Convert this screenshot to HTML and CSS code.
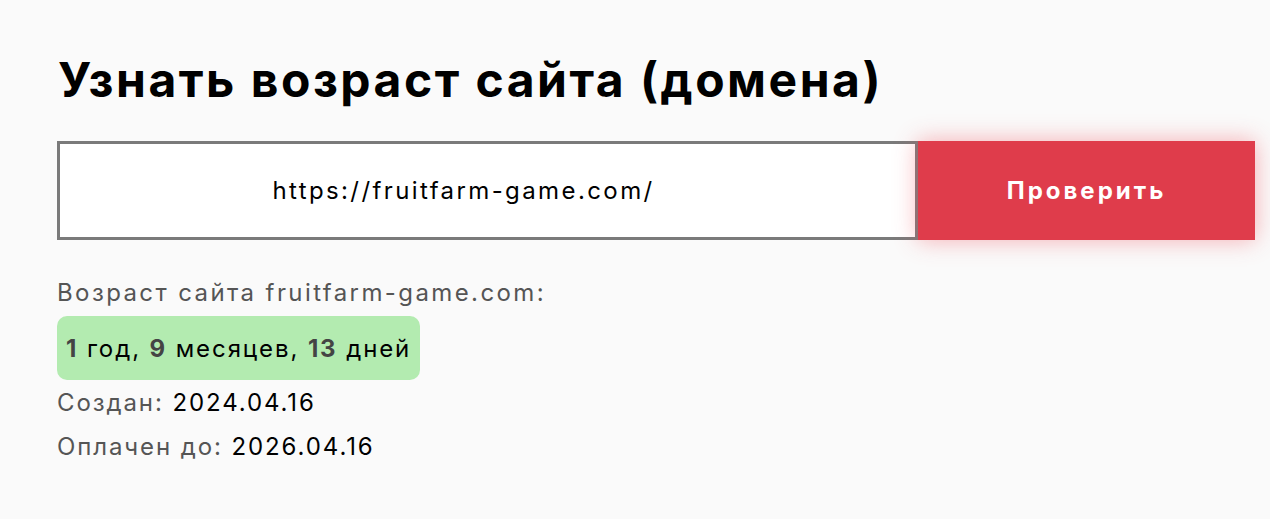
FILE: index.html
```html
<!DOCTYPE html>
<html lang="ru">
<head>
<meta charset="utf-8">
<title>Узнать возраст сайта (домена)</title>
<link rel="stylesheet" href="styles.css">
</head>
<body>
<main class="page">
  <h1 class="title">Узнать возраст сайта (домена)</h1>
  <form class="check-form">
    <input class="url-input" type="text" value="https://fruitfarm-game.com/">
    <button class="check-btn" type="button">Проверить</button>
  </form>
  <div class="result">
    <div class="result-label">Возраст сайта fruitfarm-game.com:</div>
    <div class="age-badge"><b>1</b> год, <b>9</b> месяцев, <b>13</b> дней</div>
    <div class="result-row">Создан: <span class="value">2024.04.16</span></div>
    <div class="result-row">Оплачен до: <span class="value">2026.04.16</span></div>
  </div>
</main>
</body>
</html>
```
FILE: styles.css
```css
html, body {
  margin: 0;
  padding: 0;
  background: #fafafa;
}
body {
  font-family: Inter, "DejaVu Sans", sans-serif;
  color: #000;
}
.page {
  padding: 41px 0 0 57px;
  width: 1198px;
}
.title {
  margin: 0 0 22px 1px;
  font-size: 48px;
  font-weight: 700;
  line-height: 78px;
  letter-spacing: 2.5px;
  color: #000;
}
.check-form {
  display: flex;
  height: 99px;
}
.url-input {
  box-sizing: border-box;
  width: 861px;
  height: 99px;
  border: 3px solid #7a7a7a;
  background: #fff;
  padding: 0 48px 0 0;
  font-family: inherit;
  font-size: 24px;
  letter-spacing: 2.4px;
  color: #000;
  text-align: center;
  outline: none;
}
.check-btn {
  width: 337px;
  height: 99px;
  border: 0;
  background: #df3c4b;
  color: #fff;
  font-family: inherit;
  font-size: 24px;
  font-weight: 700;
  letter-spacing: 3px;
  box-shadow: 0 0 22px rgba(240, 80, 90, 0.45);
  cursor: pointer;
}
.result {
  margin-top: 38px;
  display: flex;
  flex-direction: column;
  align-items: flex-start;
  letter-spacing: 2.4px;
}
.result-label {
  font-size: 24px;
  line-height: 30px;
  color: #555;
}
.age-badge {
  margin-top: 8px;
  box-sizing: border-box;
  height: 64px;
  padding: 0 9px;
  display: flex;
  align-items: center;
  white-space: pre;
  background: #b3ebb0;
  border-radius: 10px;
  font-size: 24px;
  letter-spacing: 1.9px;
  color: #000;
}
.age-badge b {
  color: #444;
  font-weight: 700;
}
.result-row {
  margin-top: 1px;
  font-size: 24px;
  line-height: 44px;
  letter-spacing: 1.9px;
  color: #555;
}
.result-row + .result-row {
  margin-top: 0;
}
.result-row .value {
  color: #000;
}
```
